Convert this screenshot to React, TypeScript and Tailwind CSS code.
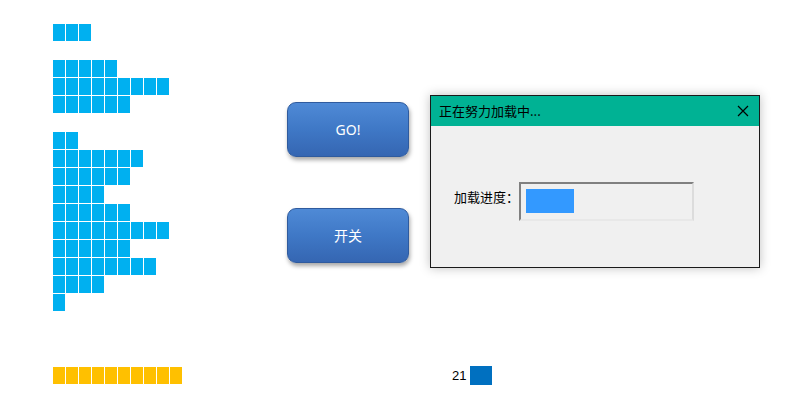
import React from 'react';

const groups: number[][] = [
  [3],
  [5, 9, 6],
  [2, 7, 6, 4, 6, 9, 6, 8, 4, 1],
];

const Cells: React.FC<{ count: number; color: string }> = ({ count, color }) => (
  <div className="flex gap-px h-[17px]">
    {Array.from({ length: count }).map((_, i) => (
      <div key={i} className={`w-[12px] h-[17px] ${color}`} />
    ))}
  </div>
);

const Btn: React.FC<{ label: string }> = ({ label }) => (
  <div className="w-[122px] h-[55px] rounded-[9px] bg-gradient-to-b from-[#4f8ad6] via-[#3f78c6] to-[#3566b2] border border-[#2f5b9e] shadow-[1px_3px_4px_rgba(0,0,0,0.35)] flex items-center justify-center text-white text-[14px] font-['Noto_Sans','Noto_Sans_CJK_SC',sans-serif]">
    {label}
  </div>
);

export default function App() {
  return (
    <div className="w-[794px] h-[409px] bg-white overflow-hidden pt-[24px] pl-[53px] font-['Liberation_Sans','Noto_Sans_CJK_SC',sans-serif]">
      <div className="flex">
        {/* bar columns */}
        <div className="w-[234px] flex flex-col gap-[19px]">
          {groups.map((g, gi) => (
            <div key={gi} className="flex flex-col gap-px">
              {g.map((n, ri) => (
                <Cells key={ri} count={n} color="bg-[#00b0f0]" />
              ))}
            </div>
          ))}
        </div>

        {/* buttons */}
        <div className="mt-[78px] flex flex-col gap-[51px]">
          <Btn label="GO!" />
          <Btn label="开关" />
        </div>

        {/* loading dialog */}
        <div className="ml-[21px] mt-[71px] w-[330px] h-[173px] border border-[#1a1a1a] bg-[#f0f0f0] shadow-[0_0_10px_rgba(0,0,0,0.25)] flex flex-col">
          <div className="h-[30px] bg-[#00b294] flex items-center justify-between pl-[8px] pr-[10px] text-[13px] text-black font-['Noto_Sans_CJK_SC',sans-serif]">
            <span>正在努力加载中...</span>
            <svg width="12" height="12" viewBox="0 0 12 12" className="stroke-black">
              <path d="M1 1 L11 11 M11 1 L1 11" strokeWidth="1.2" />
            </svg>
          </div>
          <div className="flex items-start pl-[23px] pt-[56px]">
            <span className="text-[13px] leading-[19px] mt-[5px] text-black w-[65px] font-['Noto_Sans_CJK_SC',sans-serif]">加载进度：</span>
            <div className="w-[175px] h-[39px] border-2 border-t-[#808080] border-l-[#808080] border-r-[#dcdcdc] border-b-[#e8e8e8] bg-[#f0f0f0] pl-[5px] pt-[5px]">
              <div className="w-[48px] h-[24px] bg-[#3399ff]" />
            </div>
          </div>
        </div>
      </div>

      {/* bottom row */}
      <div className="mt-[55px] flex items-end">
        <div className="w-[399px]">
          <Cells count={10} color="bg-[#ffc000]" />
        </div>
        <span className="text-[13px] text-black leading-none mb-[2px] w-[18px]">21</span>
        <div className="w-[22px] h-[19px] bg-[#0070c0] mb-[-1px]" />
      </div>
    </div>
  );
}
